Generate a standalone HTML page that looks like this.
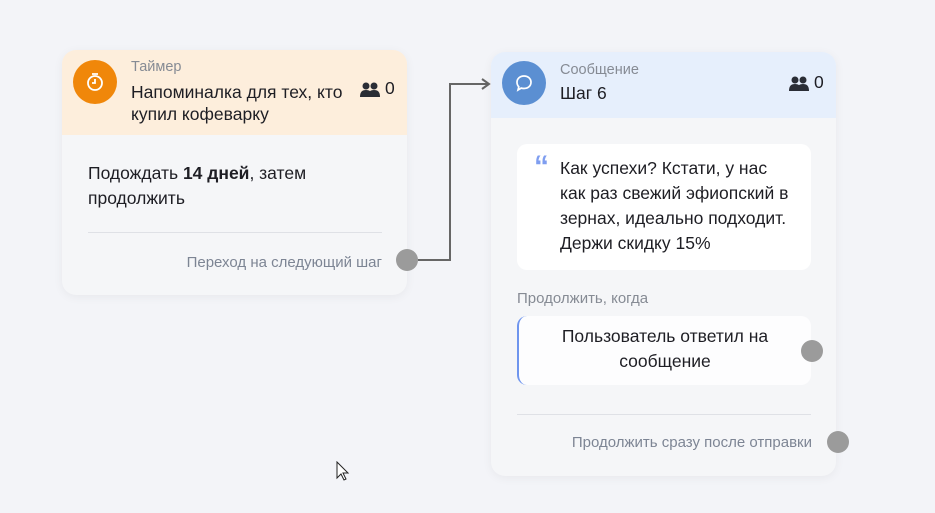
<!DOCTYPE html>
<html><head><meta charset="utf-8"><style>
*{margin:0;padding:0;box-sizing:border-box}
body{width:935px;height:513px;background:#f3f4f8;font-family:"Liberation Sans",sans-serif;position:relative;overflow:hidden;color:#1e1e24}
.a{position:absolute}
.card{position:absolute;background:#f5f6f8;border-radius:14px;overflow:hidden;box-shadow:0 2px 10px rgba(0,0,0,.05)}
.sub{font-size:14.5px;color:#868b94}
.ttl{font-size:17.5px;color:#1e1e24;line-height:22px}
.dot{position:absolute;width:22px;height:22px;border-radius:50%;background:#9b9b9b}
.foot{font-size:15px;color:#7d8594}
.txt{font-size:17.5px;line-height:25px}
</style></head><body>
<div class="card" style="left:62px;top:50px;width:345px;height:245px">
 <div class="a" style="left:0;top:0;width:345px;height:85px;background:#fdeedc"></div>
 <div class="a" style="left:11px;top:10px;width:44px;height:44px;border-radius:50%;background:#f0870a"></div>
 <svg class="a" style="left:22px;top:20px" width="22" height="24" viewBox="0 0 22 24"><circle cx="11" cy="13" r="7" fill="none" stroke="#fff" stroke-width="1.8"/><path d="M11 9v4h-3M8 4h6" stroke="#fff" stroke-width="1.8" fill="none"/></svg>
 <div class="a sub" style="left:69px;top:9px">Таймер</div>
 <div class="a ttl" style="left:69px;top:31px;width:235px;line-height:22px">Напоминалка для тех, кто купил кофеварку</div>
 <svg class="a" style="left:298px;top:32px" width="20" height="16" viewBox="0 0 20 16"><circle cx="6" cy="4" r="3.5" fill="#2a2d35"/><circle cx="14" cy="4" r="3.5" fill="#2a2d35"/><path d="M0 15c0-5 2-7 6-7s6 2 6 7zM8 15c0-5 2-7 6-7s6 2 6 7z" fill="#2a2d35"/></svg>
 <div class="a" style="left:323px;top:28px;font-size:17.5px">0</div>
 <div class="a txt" style="left:26px;top:111px">Подождать <b>14 дней</b>, затем<br>продолжить</div>
 <div class="a" style="left:26px;top:182px;width:294px;height:1px;background:#dfe1e6"></div>
 <div class="a foot" style="right:25px;top:204px">Переход на следующий шаг</div>
</div>
<div class="dot" style="left:396px;top:249px"></div>
<svg class="a" style="left:0;top:0" width="935" height="513"><path d="M418 260H450V84H488" fill="none" stroke="#666" stroke-width="2"/><path d="M482 79l7 5-7 5" fill="none" stroke="#666" stroke-width="2"/></svg>

<div class="card" style="left:491px;top:52px;width:345px;height:424px">
 <div class="a" style="left:0;top:0;width:345px;height:66px;background:#e6effc"></div>
 <div class="a" style="left:11px;top:9px;width:44px;height:44px;border-radius:50%;background:#5b8fd2"></div>
 <svg class="a" style="left:23px;top:21px" width="20" height="20" viewBox="0 0 20 20"><path d="M10 3c4 0 7 2.6 7 6.3S14 15.5 10 15.5c-1 0-2-.1-2.8-.4L4 17l.8-3.2C3.6 12.6 3 11 3 9.3 3 5.6 6 3 10 3z" fill="none" stroke="#fff" stroke-width="1.7"/></svg>
 <div class="a sub" style="left:69px;top:10px">Сообщение</div>
 <div class="a ttl" style="left:69px;top:30px">Шаг 6</div>
 <svg class="a" style="left:298px;top:24px" width="20" height="16" viewBox="0 0 20 16"><circle cx="6" cy="4" r="3.5" fill="#2a2d35"/><circle cx="14" cy="4" r="3.5" fill="#2a2d35"/><path d="M0 15c0-5 2-7 6-7s6 2 6 7zM8 15c0-5 2-7 6-7s6 2 6 7z" fill="#2a2d35"/></svg>
 <div class="a" style="left:323px;top:20px;font-size:17.5px">0</div>
 <div class="a" style="left:26px;top:92px;width:294px;height:126px;background:#fff;border-radius:10px"></div>
 <div class="a" style="left:43px;top:100px;font-size:30px;font-weight:bold;color:#7f9ef0;line-height:30px">“</div>
 <div class="a txt" style="left:69px;top:104px;width:232px">Как успехи? Кстати, у нас как раз свежий эфиопский в зернах, идеально подходит. Держи скидку 15%</div>
 <div class="a sub" style="left:26px;top:238px;font-size:15px">Продолжить, когда</div>
 <div class="a" style="left:26px;top:264px;width:294px;height:69px;background:#fdfdfe;border-radius:10px;border-left:2px solid #6f95ee"></div>
 <div class="a txt" style="left:28px;top:272px;width:292px;text-align:center;line-height:25px">Пользователь ответил на<br>сообщение</div>
 <div class="dot" style="left:310px;top:288px"></div>
 <div class="a" style="left:26px;top:362px;width:294px;height:1px;background:#dfe1e6"></div>
 <div class="a foot" style="right:24px;top:382px">Продолжить сразу после отправки</div>
</div>
<div class="dot" style="left:827px;top:431px"></div>
<svg class="a" style="left:336px;top:461px" width="14" height="22" viewBox="0 0 14 22"><path d="M1 1v16l4-4 3 6 2-1-3-6h5z" fill="#fff" stroke="#222" stroke-width="1"/></svg>
</body></html>
